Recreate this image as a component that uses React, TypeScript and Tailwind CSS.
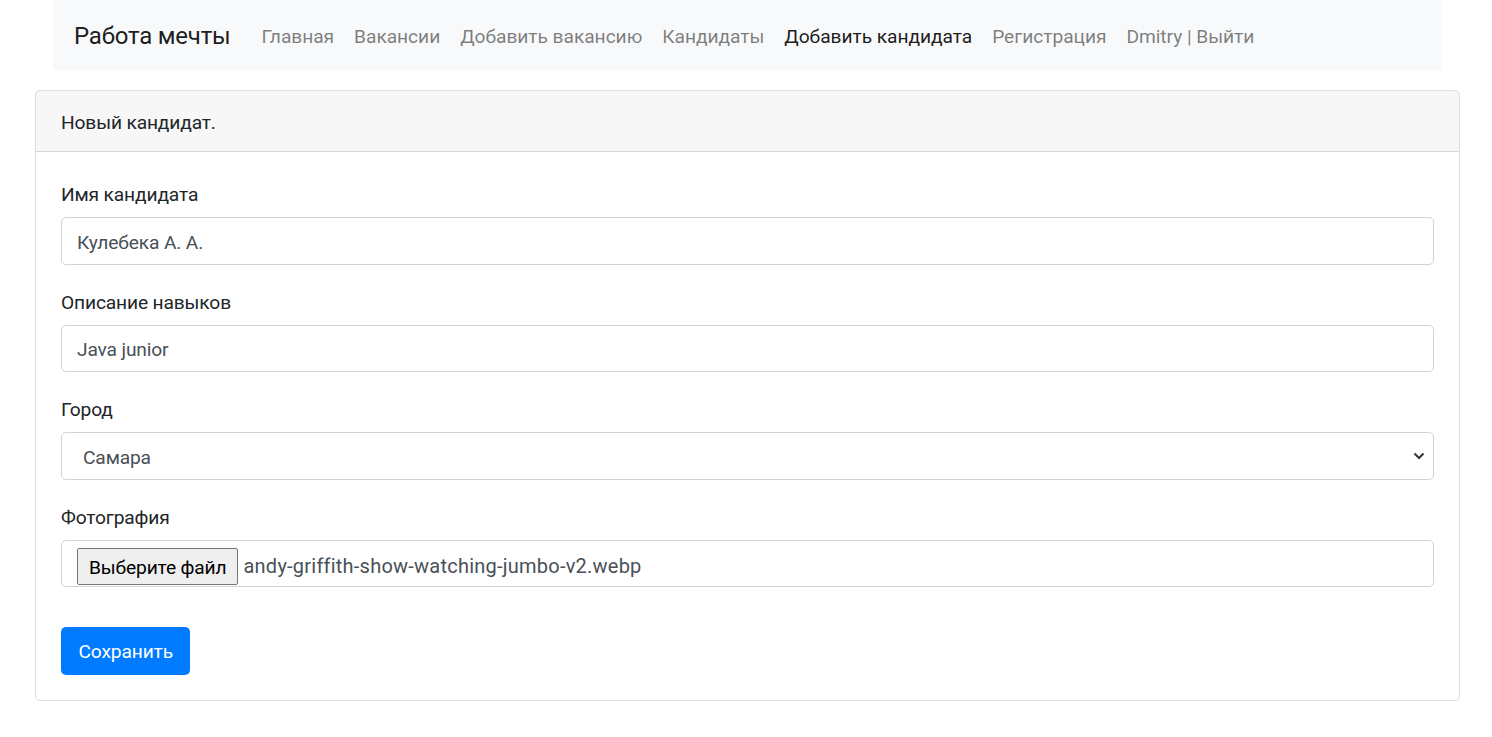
import React from "react";

const font = { fontFamily: "'Segoe UI', Roboto, 'Noto Sans', 'Liberation Sans', sans-serif" };

export default function App() {
  const links = [
    { t: "Главная", a: false },
    { t: "Вакансии", a: false },
    { t: "Добавить вакансию", a: false },
    { t: "Кандидаты", a: false },
    { t: "Добавить кандидата", a: true },
    { t: "Регистрация", a: false },
    { t: "Dmitry | Выйти", a: false },
  ];
  return (
    <div
      className="min-h-[737px] bg-white text-[#212529] text-[19.2px] tracking-[-0.15px] leading-[30px]"
      style={font}
    >
      <nav className="ml-[53px] w-[1388px] h-[70px] bg-[#f8f9fa] flex items-center px-[20px] pt-[4px]">
        <span className="text-[24px] tracking-[-0.2px] leading-[37.5px] text-[rgba(0,0,0,0.9)] mr-[21px] ml-px">
          Работа мечты
        </span>
        <div className="flex items-center tracking-[-0.05px]">
          {links.map((l) => (
            <span
              key={l.t}
              className={
                "px-[10px] " + (l.a ? "text-[rgba(0,0,0,0.9)]" : "text-[rgba(0,0,0,0.5)]")
              }
            >
              {l.t}
            </span>
          ))}
        </div>
      </nav>

      <div className="ml-[35px] mt-[20px] w-[1425px] border border-[rgba(0,0,0,0.125)] rounded-[5px]">
        <div className="px-[25px] pt-[17px] pb-[13px] bg-[rgba(0,0,0,0.03)] border-b border-[rgba(0,0,0,0.125)]">
          Новый кандидат.
        </div>
        <div className="p-[25px]">
          <div className="mb-[20px]">
            <div className="pt-[3px] mb-[7px]">Имя кандидата</div>
            <div className="h-[47.5px] border border-[#ced4da] rounded-[5px] px-[15px] pt-[4px] flex items-center text-[#495057]">
              Кулебека А. А.
            </div>
          </div>
          <div className="mb-[20px]">
            <div className="pt-[3px] mb-[7px]">Описание навыков</div>
            <div className="h-[47.5px] border border-[#ced4da] rounded-[5px] px-[15px] pt-[4px] flex items-center text-[#495057]">
              Java junior
            </div>
          </div>
          <div className="mb-[20px]">
            <div className="pt-[3px] mb-[7px]">Город</div>
            <div className="h-[47.5px] border border-[#ced4da] rounded-[5px] pl-[21px] pr-[8px] pt-[4px] flex items-center justify-between text-[#495057]">
              <span>Самара</span>
              <svg width="12" height="8" viewBox="0 0 12 8" className="-mt-[4px]">
                <path d="M1.5 1.5 L6 6 L10.5 1.5" fill="none" stroke="#343a40" strokeWidth="2.2" />
              </svg>
            </div>
          </div>
          <div className="mb-[40px]">
            <div className="pt-[3px] mb-[7px]">Фотография</div>
            <div className="h-[47.5px] border border-[#ced4da] rounded-[5px] pl-[15px] flex items-center text-[#495057]">
              <span className="h-[37px] mt-[6px] px-[11px] pt-[3px] flex items-center bg-[#efefef] border border-[#767676] rounded-[2px] text-black mr-[5px]">
                Выберите файл
              </span>
              <span className="pt-[5px] text-[20px] tracking-[0.23px]">andy-griffith-show-watching-jumbo-v2.webp</span>
            </div>
          </div>
          <div className="inline-flex items-center h-[47.5px] px-[17.5px] pt-[3px] bg-[#007bff] text-white rounded-[5px]">
            Сохранить
          </div>
        </div>
      </div>
    </div>
  );
}
